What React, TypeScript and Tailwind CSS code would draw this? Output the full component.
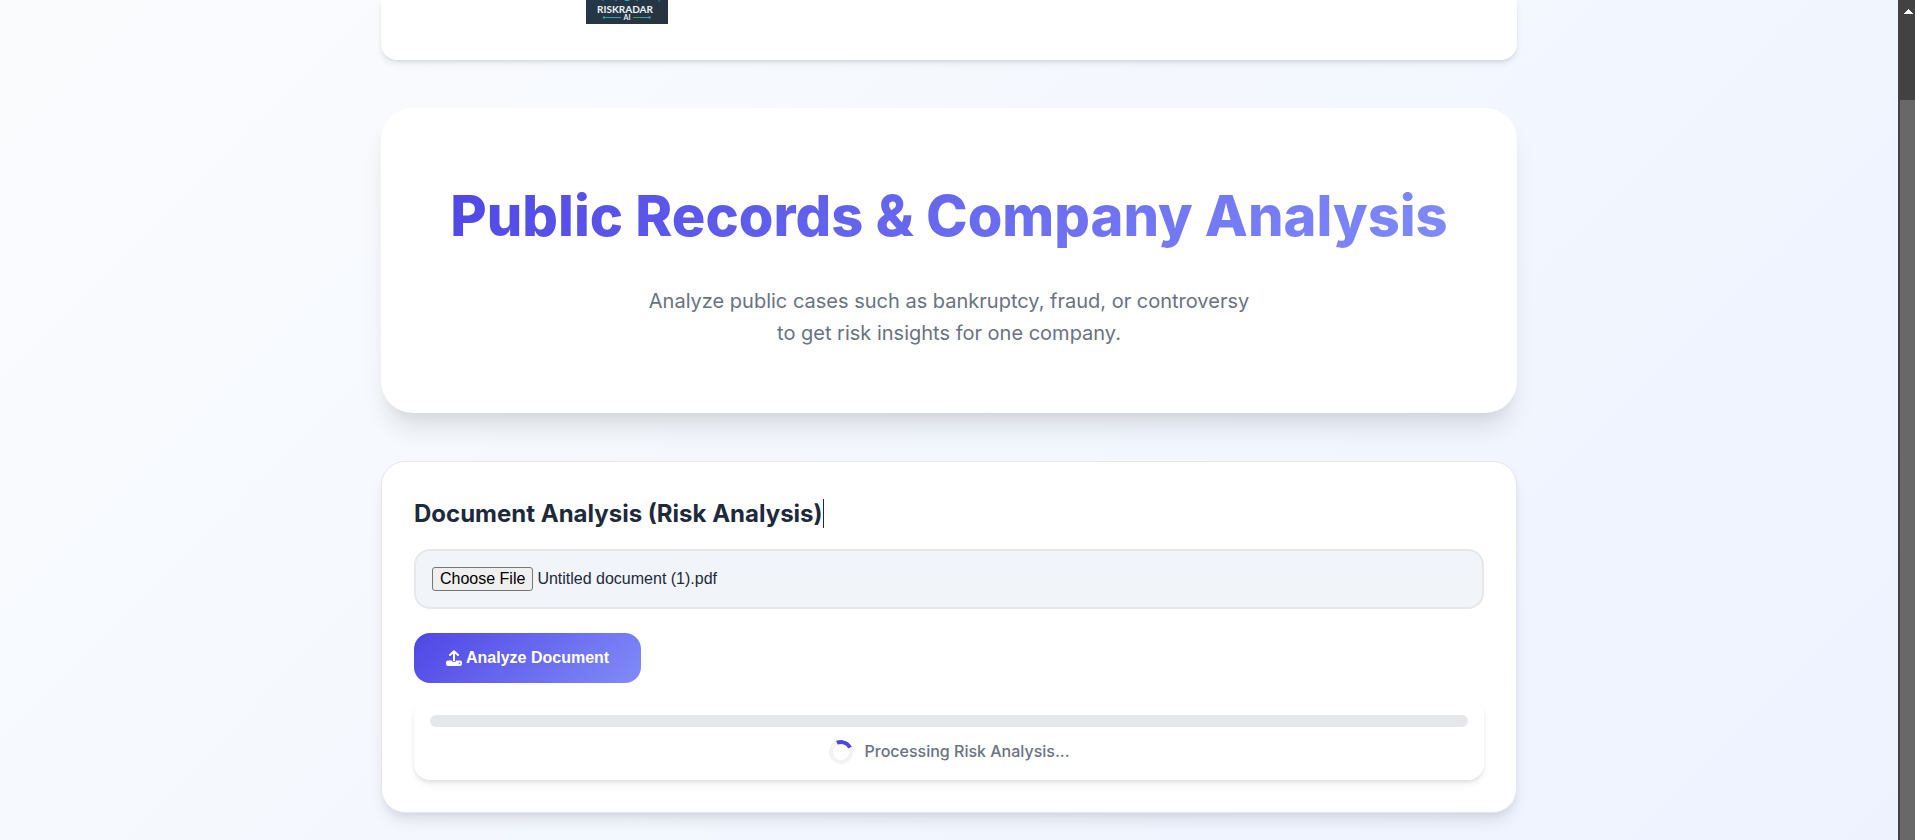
import { useEffect, useRef } from "react";

function Logo() {
  return (
    <svg viewBox="0 0 82 24" className="w-[82px] h-6" role="img" aria-label="Risk Radar AI">
      <defs>
        <linearGradient id="logo-bg" x1="0" y1="0" x2="1" y2="1">
          <stop offset="0" stopColor="#22384a" />
          <stop offset="1" stopColor="#2a3340" />
        </linearGradient>
      </defs>
      <rect width="82" height="24" fill="url(#logo-bg)" />
      <path d="M38 0h6l-2 1h-2z" fill="#27b6d6" />
      <path d="M16 0l2 1M29 0l2 1M52 0l-2 1" stroke="#3f6f80" />
      <path d="M73 0v2" stroke="#2f8190" />
      <text
        x="39"
        y="13"
        textAnchor="middle"
        fontFamily="Lato, sans-serif"
        fontWeight="700"
        fontSize="10"
        fill="#eef4f7"
      >
        RISKRADAR
      </text>
      <path d="M18 17.500h17" stroke="#2fa3b5" />
      <path d="M47 17.500h8" stroke="#35a83c" />
      <path d="M55 17.500h8" stroke="#2fa3b5" />
      <circle cx="18" cy="17.500" r="1.200" fill="#2fa3b5" />
      <circle cx="63.500" cy="17.500" r="1.200" fill="#2fa3b5" />
      <text
        x="41"
        y="20"
        textAnchor="middle"
        fontFamily="Lato, sans-serif"
        fontWeight="700"
        fontSize="7"
        fill="#eef4f7"
      >
        AI
      </text>
    </svg>
  );
}

function UploadIcon() {
  return (
    <svg viewBox="0 0 16 16" className="size-4" fill="none" aria-hidden="true">
      <path
        d="M8 10.500V1.500M4 5l4-3.800L12 5"
        stroke="#fff"
        strokeWidth="2"
        strokeLinecap="round"
        strokeLinejoin="round"
      />
      <path
        d="M2 10.500h3.800a2.300 2.300 0 0 0 4.400 0H14a2 2 0 0 1 2 2V14a2 2 0 0 1-2 2H2a2 2 0 0 1-2-2v-1.500a2 2 0 0 1 2-2z"
        fill="#fff"
      />
      <circle cx="13.500" cy="13.300" r="0.800" fill="#6866ef" />
    </svg>
  );
}

function Hero() {
  return (
    <section className="bg-white rounded-[32px] p-16 text-center shadow-[0_20px_25px_-5px_rgba(0,0,0,0.1),0_10px_10px_-5px_rgba(0,0,0,0.04)]">
      <h1 className="mb-6 text-[56px] leading-[89px] font-extrabold text-transparent bg-clip-text bg-[linear-gradient(135deg,#4f46e5,#818cf8)]">
        Public Records &amp; Company Analysis
      </h1>

      <p className="max-w-[612px] mx-auto text-xl leading-8 text-gray-500">
        Analyze public cases such as bankruptcy, fraud, or controversy to get risk insights for one company.
      </p>
    </section>
  );
}

function DocumentAnalysis() {
  const fileRef = useRef<HTMLInputElement>(null);

  useEffect(() => {
    const data = new DataTransfer();
    data.items.add(new File([""], "Untitled document (1).pdf", { type: "application/pdf" }));
    if (fileRef.current) fileRef.current.files = data.files;
  }, []);

  return (
    <section className="bg-white border border-gray-200 rounded-3xl p-8 shadow-[0_10px_15px_-3px_rgba(0,0,0,0.1),0_4px_6px_-2px_rgba(0,0,0,0.05)]">
      <h2 className="flex items-center mb-4 text-2xl leading-[39px] font-bold text-gray-800">
        <label htmlFor="document">Document Analysis (Risk Analysis)</label>
        <span className="h-[29px] border-r border-gray-800" />
      </h2>

      <input
        ref={fileRef}
        id="document"
        type="file"
        className="block w-full h-[60px] p-4 border-2 border-gray-200 rounded-2xl bg-slate-100 text-gray-800 text-base leading-6 font-['Liberation_Sans',Arial,sans-serif] file:h-6 file:px-[7px] file:mr-1 file:border file:border-solid file:border-[#767676] file:rounded-[3px] file:bg-[#efefef] file:text-black file:leading-5"
      />

      <button
        type="button"
        className="flex items-center gap-1 mt-6 h-[50px] px-8 rounded-2xl text-white text-base font-bold font-['Liberation_Sans',Arial,sans-serif] bg-[linear-gradient(135deg,#4f46e5,#818cf8)]"
      >
        <UploadIcon />
        Analyze Document
      </button>

      <div className="mt-4 p-4 bg-white rounded-2xl shadow-[0_4px_6px_-1px_rgba(0,0,0,0.1),0_2px_4px_-1px_rgba(0,0,0,0.06)]">
        <div className="h-3 rounded-full bg-gray-200" role="progressbar" aria-label="Risk analysis" />

        <div className="flex items-center justify-center gap-3 mt-3">
          <span className="size-6 rounded-full border-4 border-[#f3f3f3] border-t-[#4f46e5] rotate-[20deg]" />
          <p className="text-base leading-[25px] font-medium text-gray-500">Processing Risk Analysis...</p>
        </div>
      </div>
    </section>
  );
}

function Scrollbar() {
  return (
    <div className="w-[17px] shrink-0 flex flex-col bg-[#424242]">
      <svg viewBox="0 0 17 100" className="h-[100px]" aria-hidden="true" shapeRendering="crispEdges">
        <path d="M10 9h1v1h1v1h1v1h1v1h1v1H6v-1h1v-1h1v-1h1v-1h1z" fill="#fff" />
      </svg>
      <div className="flex-1 ml-[2px] bg-[#686868]" />
    </div>
  );
}

export default function App() {
  return (
    <div className="flex h-screen overflow-hidden font-['Inter',sans-serif]">
      <main className="flex-1 bg-[linear-gradient(135deg,#fafbfd,#f4f8fe_45%,#eef2ff)]">
        <div className="max-w-[1200px] mx-auto px-8 flex flex-col gap-12">
          <header className="bg-white rounded-b-2xl pl-[205px] pb-9 shadow-[0_4px_6px_-1px_rgba(0,0,0,0.1),0_2px_4px_-1px_rgba(0,0,0,0.06)]">
            <Logo />
          </header>

          <Hero />
          <DocumentAnalysis />
        </div>
      </main>

      <Scrollbar />
    </div>
  );
}
